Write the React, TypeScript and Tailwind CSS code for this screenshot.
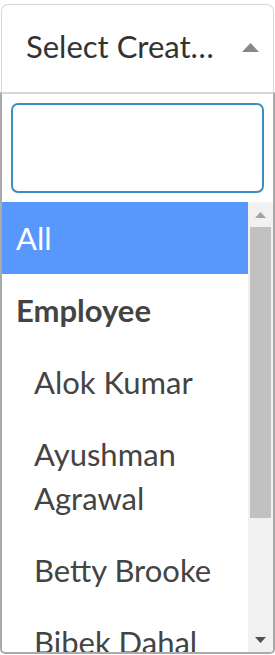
import React from "react";

type Opt = { label: string; kind: "all" | "group" | "child"; active?: boolean };

const options: Opt[] = [
  { label: "All", kind: "all", active: true },
  { label: "Employee", kind: "group" },
  { label: "Alok Kumar", kind: "child" },
  { label: "Ayushman Agrawal", kind: "child" },
  { label: "Betty Brooke", kind: "child" },
  { label: "Bibek Dahal", kind: "child" },
];

export default function App() {
  return (
    <div className="w-[275px] h-[655px] bg-white overflow-hidden font-['Lato','Noto_Sans',sans-serif] text-[#444]">
      <div className="mt-[4px] mx-[1px] h-[88px] border border-b-0 border-[#d3d6de] rounded-t-[7px] flex items-center pl-[24px] pr-[14px]">
        <div className="w-[192px] mb-[5px] truncate text-[31px] leading-[40px] text-[#333]">Select Creator</div>
        <div className="flex-1" />
        <svg width="17" height="9" viewBox="0 0 17 9" className="mb-[3px]">
          <polygon points="0,9 8.5,0 17,9" fill="#888" />
        </svg>
      </div>
      <div className="border-x-2 border-b-2 border-t-2 border-t-[#d3d6de] border-x-[#aaa] border-b-[#aaa] rounded-b-[5px] overflow-hidden">
        <div className="pt-[9px] pb-[9px] px-[9px]">
          <div className="h-[90px] border-2 border-[#3d8ec0] rounded-[7px]" />
        </div>
        <div className="flex h-[450px]">
          <div className="flex-1 overflow-hidden">
            {options.map((o) => (
              <div
                key={o.label}
                className={
                  o.kind === "all"
                    ? "bg-[#5897fb] text-white pl-[14px] pr-[10px] py-[14px] text-[31px] leading-[44px]"
                    : o.kind === "group"
                    ? "pl-[14px] pr-[10px] py-[14px] text-[31px] leading-[44px] font-bold"
                    : "pl-[32px] pr-[10px] py-[14px] text-[31px] leading-[44px]"
                }
              >
                {o.label}
              </div>
            ))}
          </div>
          <div className="w-[25px] bg-[#f1f1f1] flex flex-col items-center">
            <div className="h-[25px] flex items-center justify-center">
              <svg width="11" height="6" viewBox="0 0 11 6">
                <polygon points="0,6 5.5,0 11,6" fill="#a3a3a3" />
              </svg>
            </div>
            <div className="w-[21px] h-[291px] bg-[#c1c1c1]" />
            <div className="flex-1" />
            <div className="h-[25px] flex items-center justify-center">
              <svg width="11" height="6" viewBox="0 0 11 6">
                <polygon points="0,0 5.5,6 11,0" fill="#505050" />
              </svg>
            </div>
          </div>
        </div>
      </div>
    </div>
  );
}
